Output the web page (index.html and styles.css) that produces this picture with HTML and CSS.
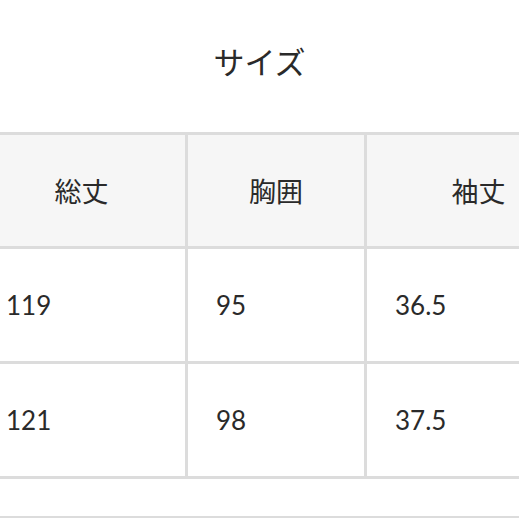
FILE: index.html
```html
<!DOCTYPE html>
<html lang="ja">
<head>
<meta charset="utf-8">
<link rel="stylesheet" href="styles.css">
</head>
<body>
<h2 class="title">サイズ</h2>
<div class="table-wrap">
<table class="size-table">
  <thead>
    <tr class="head-row">
      <th class="c1">総丈</th>
      <th class="c2">胸囲</th>
      <th class="c3">袖丈</th>
    </tr>
  </thead>
  <tbody>
    <tr class="row">
      <td>119</td>
      <td>95</td>
      <td>36.5</td>
    </tr>
    <tr class="row">
      <td>121</td>
      <td>98</td>
      <td>37.5</td>
    </tr>
  </tbody>
</table>
</div>
<div class="after"></div>
</body>
</html>
```

FILE: styles.css
```css
html, body {
  margin: 0;
  padding: 0;
  background: #ffffff;
  overflow: hidden;
}
body {
  font-family: "Noto Sans CJK JP", sans-serif;
  color: #2a2a2a;
}
.title {
  margin: 0 0 54px 0;
  padding-top: 44px;
  height: 34px;
  line-height: 34px;
  font-size: 31px;
  font-weight: 400;
  text-align: center;
}
.table-wrap {
  width: 519px;
  overflow: hidden;
}
.size-table {
  margin-left: -25px;
  border-spacing: 0;
  border-top: 3px solid #dcdcdc;
  border-left: 3px solid #dcdcdc;
  table-layout: fixed;
  width: 618px;
}
.size-table th,
.size-table td {
  box-sizing: border-box;
  border-right: 3px solid #dcdcdc;
  border-bottom: 3px solid #dcdcdc;
  vertical-align: middle;
  padding: 0;
}
.size-table th {
  background: #f6f6f6;
  font-weight: 400;
  font-size: 27px;
  text-align: center;
  height: 114px;
}
.c1 { width: 210px; }
.c2 { width: 179px; }
.c3 { width: 226px; }
.size-table td {
  height: 115px;
  padding-left: 28px;
  text-align: left;
  font-family: "Lato", "Noto Sans CJK JP", sans-serif;
  font-size: 26px;
}
.after {
  margin-top: 37px;
  border-top: 2px solid #dcdcdc;
}
```
